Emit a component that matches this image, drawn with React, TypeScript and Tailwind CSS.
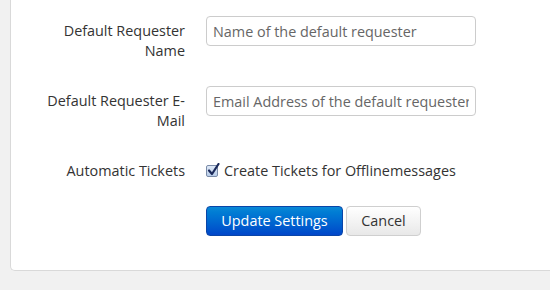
import React from "react";

function Row({ label, children, mb }: { label: React.ReactNode; children: React.ReactNode; mb: string }) {
  return (
    <div className={`flex items-start ${mb}`}>
      <div className="w-[174px] shrink-0 pt-[5px] text-right text-[14.4px] leading-[20px] text-[#333]">{label}</div>
      <div className="ml-[21px]">{children}</div>
    </div>
  );
}

export default function App() {
  return (
    <div
      className="h-[290px] w-[550px] overflow-hidden bg-[#f1f1f1] pl-[10px]"
      style={{ fontFamily: '"Open Sans", "Liberation Sans", sans-serif' }}
    >
      <div className="w-[560px] rounded-bl-[5px] border-b border-l border-[#d9d9d9] bg-white pt-[16px] pb-[34px]">
        <Row label={<>Default Requester<br />Name</>} mb="mb-[25px]">
          <input
            className="h-[30px] w-[270px] rounded-[4px] border border-[#cccccc] px-[6px] text-[14.4px] text-[#555] outline-none placeholder:text-[#666]"
            placeholder="Name of the default requester"
          />
        </Row>
        <Row label={<>Default Requester E-<br />Mail</>} mb="mb-[25px]">
          <input
            className="h-[30px] w-[270px] rounded-[4px] border border-[#cccccc] px-[6px] text-[14.4px] text-[#555] outline-none placeholder:text-[#666]"
            placeholder="Email Address of the default requester"
          />
        </Row>
        <Row label="Automatic Tickets" mb="mb-[25px]">
          <div className="flex items-center pt-[5px] text-[14.4px] leading-[20px] text-[#333]">
            <span className="relative mr-[6px] inline-block h-[12px] w-[12px] rounded-[2px] border border-[#7a8ba8] bg-gradient-to-b from-[#dfe9f7] to-[#b9cde9]">
              <svg className="absolute -top-[3px] left-[0px]" width="13" height="14" viewBox="0 0 13 14">
                <path d="M2 7.5 L5 11 L11.5 1" fill="none" stroke="#1b2a5a" strokeWidth="2.2" strokeLinecap="round" strokeLinejoin="round" />
              </svg>
            </span>
            Create Tickets for Offlinemessages
          </div>
        </Row>
        <div className="ml-[195px] flex gap-[3px]">
          <button className="h-[30px] w-[137px] rounded-[4px] border border-[#0a45a8] bg-gradient-to-b from-[#0a88d6] to-[#0346c9] text-[14.4px] text-white">
            Update Settings
          </button>
          <button className="h-[30px] w-[75px] rounded-[4px] border border-[#cfcfcf] bg-gradient-to-b from-[#ffffff] to-[#e8e8e8] text-[14.4px] text-[#333]">
            Cancel
          </button>
        </div>
      </div>
    </div>
  );
}
